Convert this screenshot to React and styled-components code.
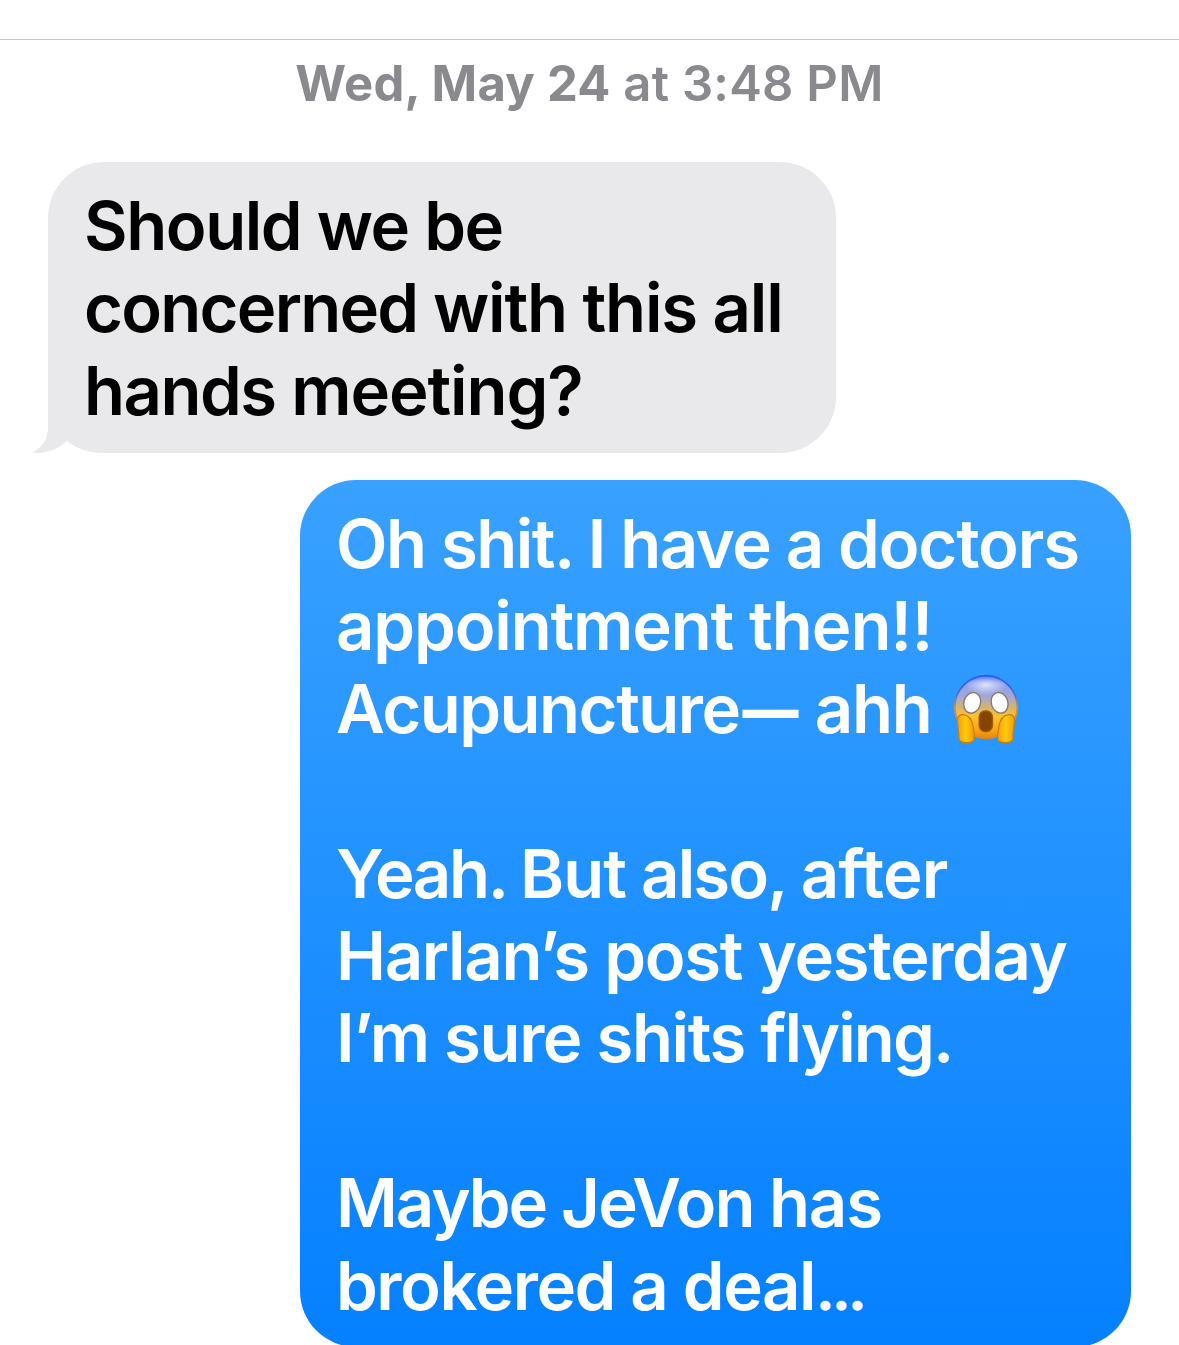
import React from 'react'
import styled, { createGlobalStyle } from 'styled-components'

const GlobalStyle = createGlobalStyle`
  * {
    box-sizing: border-box;
  }
  body {
    margin: 0;
    background: #ffffff;
    overflow: hidden;
  }
`;

const Conversation = styled.main`
  width: 1179px;
  height: 1345px;
  overflow: hidden;
  display: flex;
  flex-direction: column;
  background-color: #fff;
  font-family: Inter, "Liberation Sans", sans-serif;
`;

const TopBar = styled.div`
  flex: none;
  height: 40px;
  border-bottom: 1px solid #c6c6c8;
`;

const Timestamp = styled.div`
  flex: none;
  height: 122px;
  padding-top: 14px;
  text-align: center;
  font-size: 49px;
  line-height: 60px;
  font-weight: 600;
  letter-spacing: 0.26px;
  color: #8a8a8e;
`;

const Day = styled.span`
  font-weight: 700;
`;

const Bubble = styled.div`
  flex: none;
  position: relative;
  width: ${({ $sent }) => ($sent ? '831px' : '788px')};
  height: ${({ $sent }) => ($sent ? '867px' : '291px')};
  align-self: ${({ $sent }) => ($sent ? 'flex-end' : 'flex-start')};
  margin: ${({ $sent }) => ($sent ? '27px 48px 0 0' : '0 0 0 48px')};
  padding: 23px 36px;
  border-radius: 56px;
  color: ${({ $sent }) => ($sent ? '#fff' : '#000')};
  background: ${({ $sent }) => ($sent ? 'linear-gradient(#39a1ff, #0580ff)' : '#e9e9eb')};
`;

const Line = styled.div`
  display: flex;
  height: 82.4px;
  font-size: 67px;
  line-height: 82.4px;
  font-weight: 600;
  white-space: pre;
`;

const Text = styled.span`
  letter-spacing: ${({ $track }) => $track}px;
`;

const Dash = styled.span`
  display: inline-block;
  margin: 0 2px 0 3px;
  font-size: 56px;
  line-height: 1;
  font-weight: 900;
  letter-spacing: -1.5px;
  vertical-align: 3px;
`;

const Ellipsis = styled.span`
  margin-left: 2px;
  font-size: 43px;
  line-height: 1;
  font-weight: 900;
  -webkit-text-stroke: 1.4px currentColor;
`;

const Tail = styled.svg`
  position: absolute;
  left: -17px;
  bottom: 0;
`;

const Emoji = styled.svg`
  flex: none;
  align-self: center;
  margin-left: 20.5px;
`;

function ScreamEmoji() {
  return (
    <Emoji width="68" height="72" viewBox="0 0 68 72">
      <defs>
        <linearGradient id="face" x1="0" y1="0" x2="0" y2="1">
          <stop offset="0" stopColor="#2f62ee" />
          <stop offset="0.12" stopColor="#8b9ff0" />
          <stop offset="0.34" stopColor="#a5a8d4" />
          <stop offset="0.52" stopColor="#d9b568" />
          <stop offset="0.66" stopColor="#fdc22c" />
          <stop offset="0.85" stopColor="#f9a818" />
          <stop offset="1" stopColor="#e98608" />
        </linearGradient>
        <linearGradient id="rim" x1="0" y1="0" x2="0" y2="1">
          <stop offset="0" stopColor="#1552f2" />
          <stop offset="0.3" stopColor="#5472cf" />
          <stop offset="0.5" stopColor="#c9924c" />
          <stop offset="1" stopColor="#e8860c" />
        </linearGradient>
        <radialGradient id="shine" cx="0.5" cy="0.5" r="0.5">
          <stop offset="0" stopColor="#eceefc" stopOpacity="0.85" />
          <stop offset="1" stopColor="#e4e6fa" stopOpacity="0" />
        </radialGradient>
        <linearGradient id="hand" x1="0" y1="0" x2="1" y2="0">
          <stop offset="0" stopColor="#f0a010" />
          <stop offset="0.5" stopColor="#ffca0c" />
          <stop offset="1" stopColor="#ee9a0a" />
        </linearGradient>
      </defs>
      <circle cx="34" cy="34" r="31.2" fill="url(#face)" stroke="url(#rim)" strokeWidth="1.8" />
      <ellipse cx="34" cy="12" rx="21" ry="10" fill="url(#shine)" />
      <ellipse cx="20.2" cy="29.8" rx="8.3" ry="10.5" transform="rotate(18 20.2 29.8)" fill="#fff" stroke="#857b70" strokeWidth="1.4" />
      <ellipse cx="47.6" cy="29.8" rx="8.3" ry="10.5" transform="rotate(-18 47.6 29.8)" fill="#fff" stroke="#857b70" strokeWidth="1.4" />
      <rect x="27.2" y="38" width="13.2" height="20.6" rx="6" fill="#854400" stroke="#a35a08" strokeWidth="1.5" />
      <path d="M5.4 46.5C5.6 42.5 8 41.3 11.5 41.7C17 42.5 20 47 21 53C21.6 57 22.4 61 22.4 64.5C22.4 68.5 20 69.7 15 69.7C9.5 69.7 7 68.7 7 65C7.2 58 5.2 52 5.4 46.5Z" fill="url(#hand)" stroke="#d07a0c" strokeWidth="1.2" />
      <path d="M62.6 46.5C62.4 42.5 60 41.3 56.5 41.7C51 42.5 48 47 47 53C46.4 57 45.6 61 45.6 64.5C45.6 68.5 48 69.7 53 69.7C58.5 69.7 61 68.7 61 65C60.8 58 62.8 52 62.6 46.5Z" fill="url(#hand)" stroke="#d07a0c" strokeWidth="1.2" />
    </Emoji>
  )
}

// each line is a list of [text, tracking] runs
const received = [
  { runs: [['Should we be', -1.42]] },
  { runs: [['concerned', -1.75], [' with this all', -1.2]] },
  { runs: [['hands', -1.5], [' meeting?', -1.12]] },
];

const sent = [
  { runs: [['Oh shit. I have a ', -1.5], ['doctors', -1.15]] },
  { runs: [['appointment', -1.14], [' then', -1], ['!!', -0.1]] },
  { runs: [['Acupuncture', -1.5], ['—'], [' ahh', -1.2]], scream: true },
  { runs: [] },
  { runs: [['Yeah. ', -2.3], ['But', -1], [' also, ', -1.8], ['after', -0.9]] },
  { runs: [['Harlan’s post yesterday', -1.32]] },
  { runs: [['I’m sure shits ', -1.4], ['flying.', -1.9]] },
  { runs: [] },
  { runs: [['Maybe ', -2], ['JeVon ', -1.7], ['has', -1.2]] },
  { runs: [['brokered a deal', -1.45], ['…']] },
];

function Run({ text, track }) {
  if (text === '—') return <Dash>{text}</Dash>
  if (text === '…') return <Ellipsis>{text}</Ellipsis>
  return <Text $track={track}>{text}</Text>
}

function Message({ lines, $sent, children }) {
  return (
    <Bubble $sent={$sent}>
      {children}
      {lines.map((line, i) => (
        <Line key={i}>
          <span>
            {line.runs.map(([text, track]) => (
              <Run key={text} text={text} track={track} />
            ))}
          </span>
          {line.scream && <ScreamEmoji />}
        </Line>
      ))}
    </Bubble>
  )
}

function App() {
  return (
    <>
      <GlobalStyle />
      <Conversation>
        <TopBar />
        <Timestamp><Day>Wed, May 24</Day> at 3:48 PM</Timestamp>
        <Message lines={received}>
          <Tail width="90" height="60" viewBox="0 0 90 60">
            <path d="M17 0V35C17 46 11 55 1 59.5C15 61 27 56.5 36 47.7C46 56 58 60 73 60V30H30V0Z" fill="#e9e9eb" />
          </Tail>
        </Message>
        <Message lines={sent} $sent />
      </Conversation>
    </>
  )
}

export default App
